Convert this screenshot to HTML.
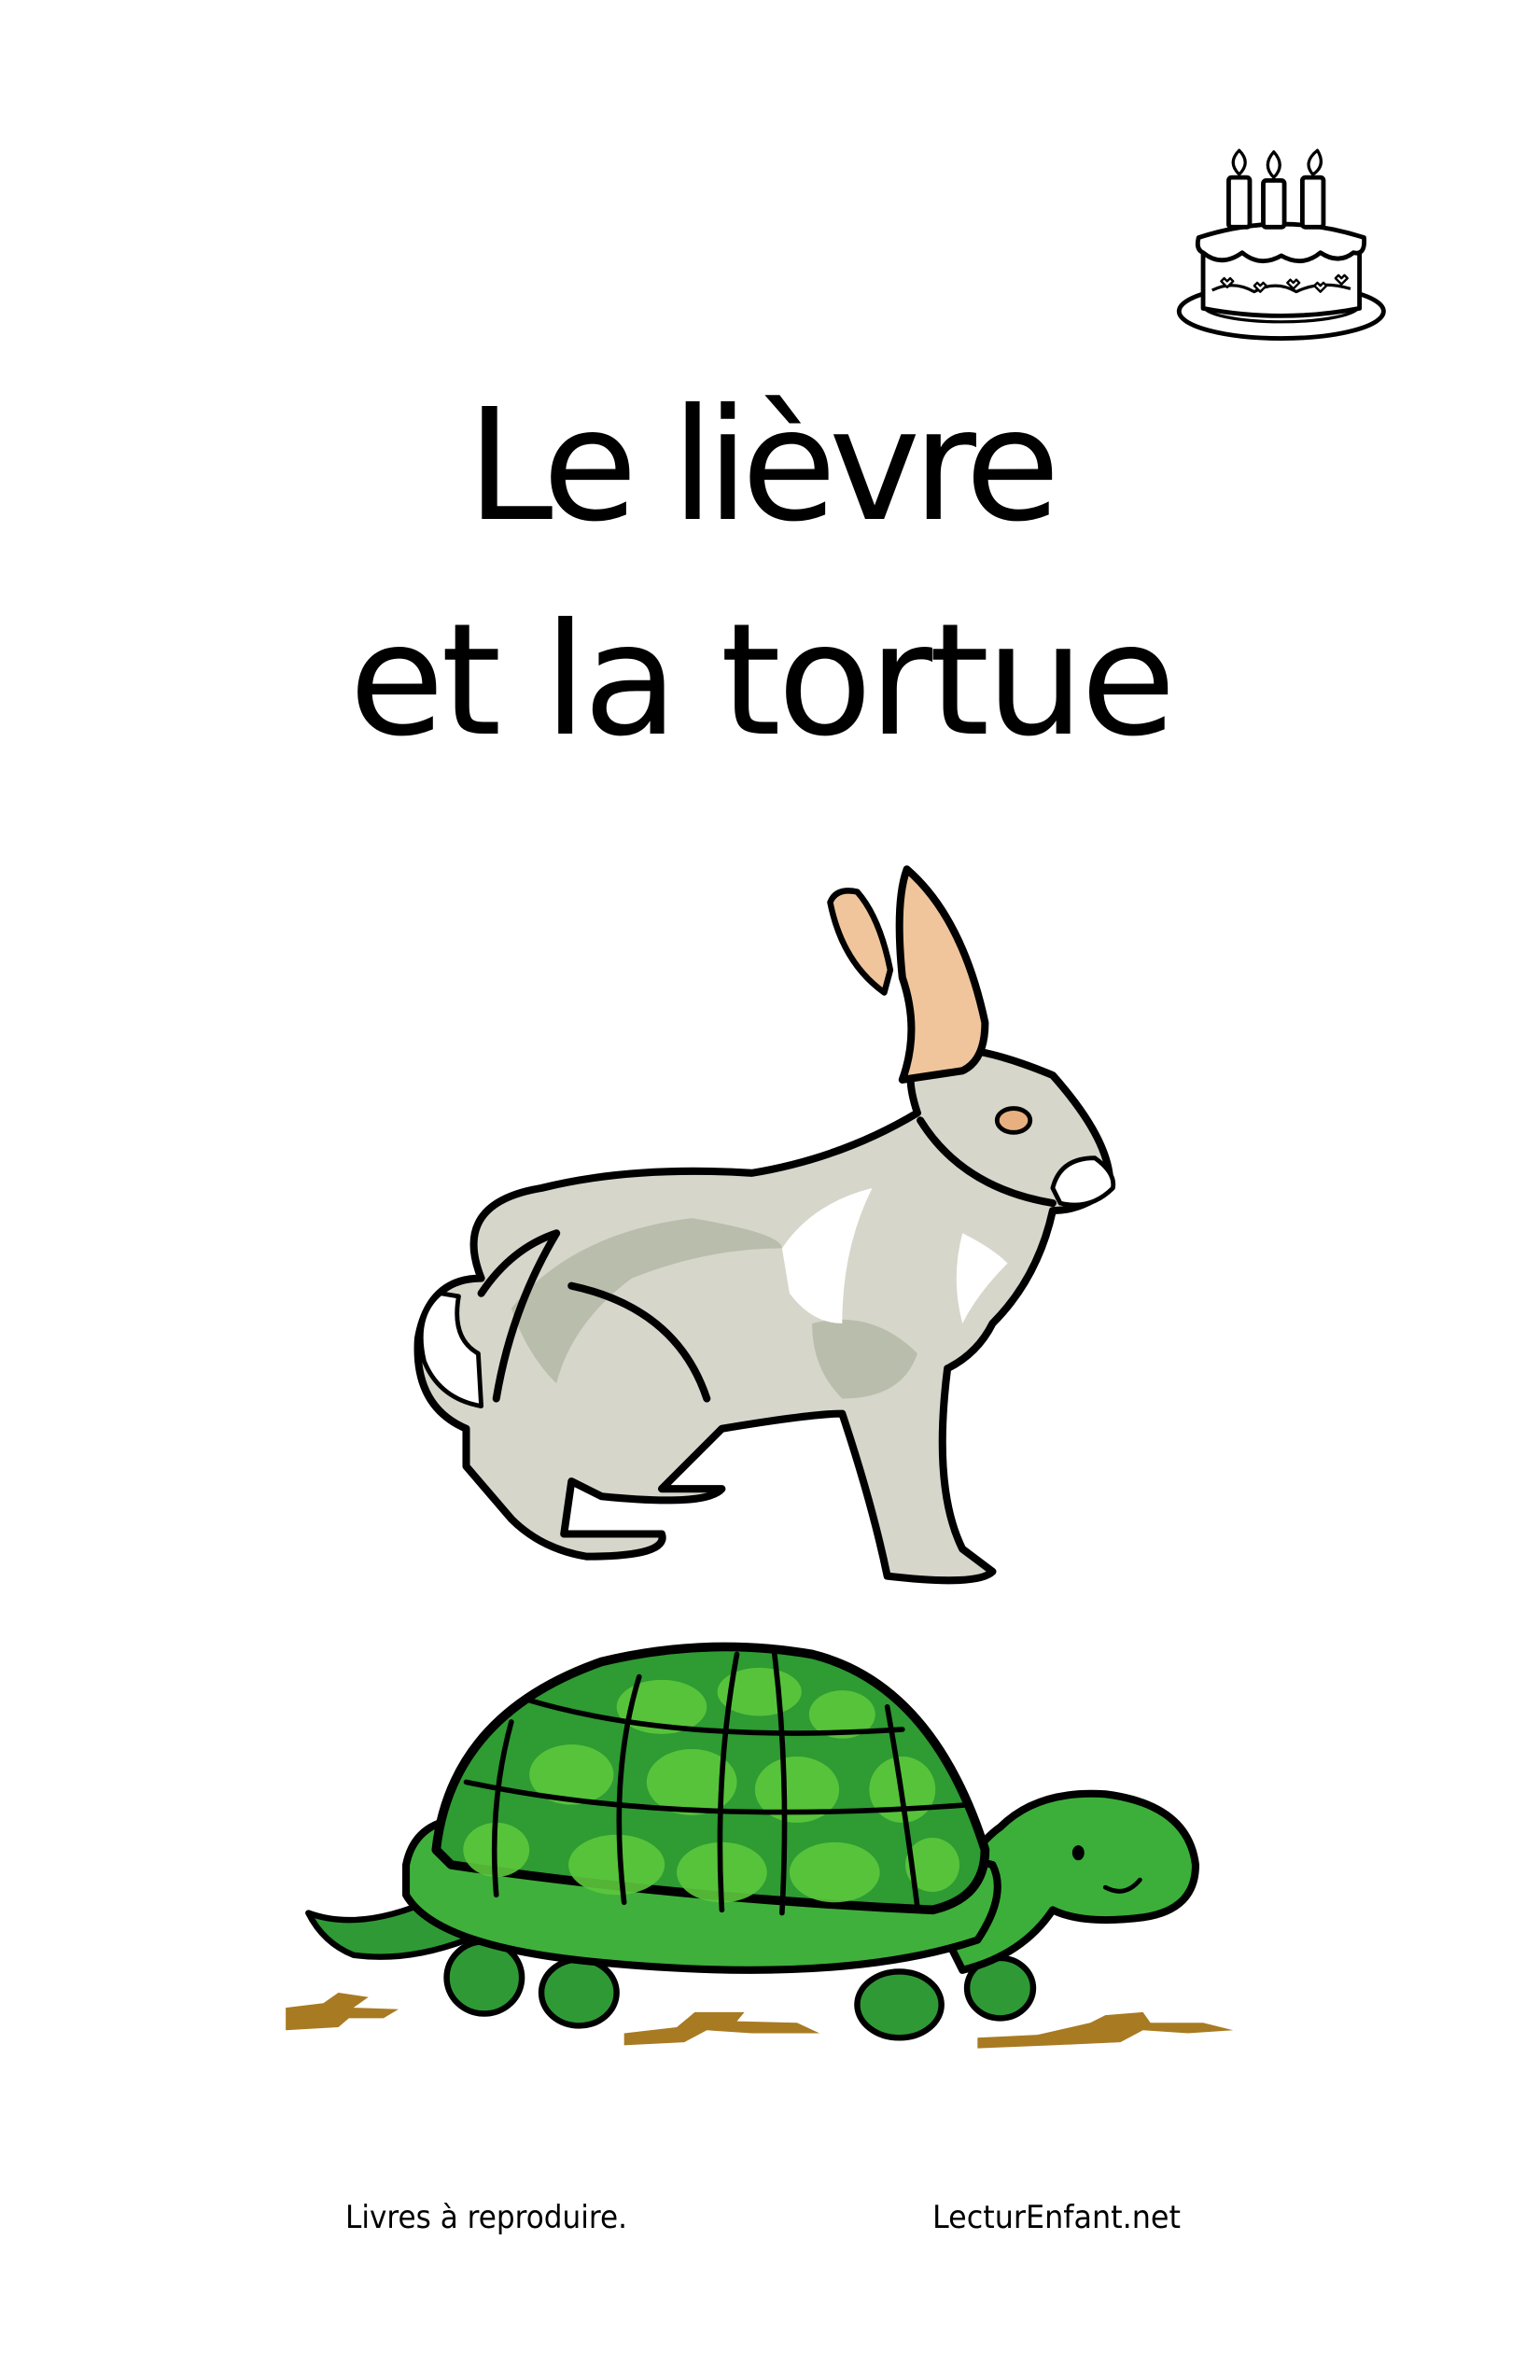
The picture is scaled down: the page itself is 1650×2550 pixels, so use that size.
<!DOCTYPE html>
<html><head><meta charset="utf-8"><style>
html,body{margin:0;padding:0;background:#fff;}
svg{display:block}
</style></head><body>
<svg width="1650" height="2550" viewBox="0 0 1650 2550" xmlns="http://www.w3.org/2000/svg">
<rect width="1650" height="2550" fill="#fff"/>
<g font-family="DejaVu Sans, Liberation Sans, sans-serif" fill="#000">
<text x="500" y="556" font-size="166" textLength="636" lengthAdjust="spacing">Le lièvre</text>
<text x="374" y="786" font-size="166" textLength="886" lengthAdjust="spacing">et la tortue</text>
<text x="370" y="2387" font-size="34" textLength="302" lengthAdjust="spacingAndGlyphs">Livres à reproduire.</text>
<text x="999" y="2387" font-size="34" textLength="266" lengthAdjust="spacingAndGlyphs">LecturEnfant.net</text>
</g>
<g transform="scale(1.6113)">
<!-- cake -->
<g fill="#fff" stroke="#000" stroke-width="3" stroke-linejoin="round">
<ellipse cx="852" cy="207" rx="68" ry="18"/>
<ellipse cx="852" cy="203" rx="52" ry="11" stroke-width="2"/>
<path d="M800 163 L800 205 Q852 215 904 205 L904 163 Z"/>
<path d="M797 158 Q852 140 907 158 Q908 170 900 168 Q890 176 878 168 Q866 178 852 170 Q838 178 826 168 Q812 178 800 168 Q795 166 797 158 Z"/>
<rect x="817" y="118" width="14" height="33" rx="2"/>
<rect x="840" y="120" width="14" height="31" rx="2"/>
<rect x="866" y="118" width="14" height="33" rx="2"/>
<path d="M824 116 Q816 108 824 100 Q832 108 824 116Z M847 118 Q839 110 847 101 Q855 110 847 118Z M873 116 Q866 108 876 100 Q882 110 873 116Z" stroke-width="2"/>
<path d="M806 193 Q820 186 834 194 Q848 186 862 194 Q878 186 898 192" fill="none" stroke-width="2"/>
<g stroke-width="1.5"><path d="M812 187 l4 4 4-4 -2-2-2 2-2-2z"/><path d="M834 190 l4 4 4-4 -2-2-2 2-2-2z"/><path d="M856 188 l4 4 4-4 -2-2-2 2-2-2z"/><path d="M874 190 l4 4 4-4 -2-2-2 2-2-2z"/><path d="M888 185 l4 4 4-4 -2-2-2 2-2-2z"/></g>
</g>
<!-- hare -->
<g stroke-linejoin="round" stroke-linecap="round">
<path d="M310 950 Q275 935 278 890 Q285 850 320 850 Q300 800 360 790 Q420 775 500 780 Q560 770 610 740 Q600 710 612 700 Q640 690 700 715 Q740 760 738 790 Q720 805 700 805 Q690 850 660 880 Q650 900 630 910 Q620 990 640 1030 L660 1045 Q650 1055 590 1048 Q580 1000 560 940 Q540 940 480 950 L440 990 L480 990 Q470 1002 400 995 L380 985 L375 1020 L440 1020 Q445 1035 390 1035 Q360 1030 340 1010 L310 975 Z" fill="#d6d6ca" stroke="#000" stroke-width="5"/>
<path d="M340 870 Q380 820 460 810 Q520 820 520 830 Q470 830 420 850 Q380 880 370 920 Q350 900 340 870Z" fill="#b9bdab"/>
<path d="M540 880 Q580 870 610 900 Q600 930 560 930 Q540 910 540 880Z" fill="#b9bdab"/>
<path d="M520 830 Q540 800 580 790 Q560 830 560 880 Q540 880 525 860 Z" fill="#fff"/>
<path d="M640 820 Q660 830 670 840 Q650 860 640 880 Q632 850 640 820Z" fill="#fff"/>
<path d="M320 860 Q340 830 370 820 Q340 870 330 930" fill="none" stroke="#000" stroke-width="5"/>
<path d="M380 855 Q450 870 470 930" fill="none" stroke="#000" stroke-width="5"/>
<path d="M612 745 Q640 790 700 800" fill="none" stroke="#000" stroke-width="5"/>
<path d="M600 718 Q612 685 600 650 Q595 600 603 578 Q640 610 655 680 Q655 705 640 712 Z" fill="#f0c59c" stroke="#000" stroke-width="5"/>
<path d="M588 660 Q560 640 552 600 Q556 590 570 593 Q585 610 592 645 Z" fill="#f0c59c" stroke="#000" stroke-width="4"/>
<ellipse cx="674" cy="745" rx="11" ry="8" fill="#e8b080" stroke="#000" stroke-width="3"/>
<path d="M700 790 Q705 770 728 770 Q742 780 740 790 Q725 805 705 800 Z" fill="#fff" stroke="#000" stroke-width="3"/>
<path d="M293 860 Q275 875 282 905 Q292 930 320 935 L318 900 Q300 890 305 862 Z" fill="#fff" stroke="#000" stroke-width="3"/>
</g>
<!-- turtle -->
<g stroke-linejoin="round" stroke-linecap="round">
<path d="M205 1272 Q240 1285 290 1262 L310 1290 Q270 1305 235 1300 Q215 1292 205 1272Z" fill="#2f9a35" stroke="#000" stroke-width="4"/>
<g fill="#2f9a35" stroke="#000" stroke-width="4">
<ellipse cx="322" cy="1315" rx="25" ry="24"/>
<ellipse cx="385" cy="1325" rx="25" ry="22"/>
<ellipse cx="598" cy="1333" rx="28" ry="22"/>
<ellipse cx="665" cy="1322" rx="22" ry="20"/>
</g>
<path d="M620 1270 Q650 1225 665 1215 Q690 1190 735 1193 Q790 1200 795 1240 Q795 1270 760 1275 Q720 1280 700 1270 Q680 1300 640 1310 Z" fill="#3caf3a" stroke="#000" stroke-width="5"/>
<path d="M270 1240 Q275 1215 300 1210 Q620 1230 660 1240 Q670 1260 650 1290 Q560 1320 400 1305 Q290 1295 270 1260 Z" fill="#3fb03c" stroke="#000" stroke-width="5"/>
<path d="M290 1230 Q300 1140 400 1105 Q470 1088 540 1100 Q620 1120 655 1230 Q655 1262 620 1270 Q450 1262 300 1240 Z" fill="#2e9b33" stroke="#000" stroke-width="6"/>
<g fill="#5cc83c" opacity="0.9">
<ellipse cx="440" cy="1135" rx="30" ry="18"/><ellipse cx="505" cy="1125" rx="28" ry="16"/><ellipse cx="560" cy="1140" rx="22" ry="16"/>
<ellipse cx="380" cy="1180" rx="28" ry="20"/><ellipse cx="460" cy="1185" rx="30" ry="22"/><ellipse cx="530" cy="1190" rx="28" ry="22"/><ellipse cx="600" cy="1190" rx="22" ry="22"/>
<ellipse cx="330" cy="1230" rx="22" ry="18"/><ellipse cx="410" cy="1240" rx="32" ry="20"/><ellipse cx="480" cy="1245" rx="30" ry="20"/><ellipse cx="555" cy="1245" rx="30" ry="20"/><ellipse cx="620" cy="1240" rx="18" ry="18"/>
</g>
<g fill="none" stroke="#000" stroke-width="3.5">
<path d="M350 1130 Q450 1160 600 1150"/>
<path d="M310 1185 Q450 1215 645 1200"/>
<path d="M340 1145 Q325 1200 330 1260"/>
<path d="M425 1115 Q405 1180 415 1265"/>
<path d="M490 1100 Q475 1180 480 1270"/>
<path d="M515 1100 Q525 1180 520 1272"/>
<path d="M590 1135 Q600 1190 610 1268"/>
</g>
<ellipse cx="717" cy="1232" rx="4" ry="5" fill="#000"/>
<path d="M735 1255 Q748 1262 758 1250" fill="none" stroke="#000" stroke-width="3"/>
</g>
<!-- dirt -->
<g fill="#a87a22">
<path d="M190 1335 L215 1332 L225 1325 L245 1328 L235 1335 L265 1336 L255 1342 L232 1342 L225 1348 L190 1350 Z"/>
<path d="M415 1352 L450 1348 L462 1338 L495 1338 L490 1344 L530 1345 L545 1352 L500 1352 L470 1350 L455 1358 L415 1360 Z"/>
<path d="M650 1355 L690 1353 L725 1345 L735 1340 L760 1338 L765 1345 L800 1345 L820 1350 L790 1352 L760 1350 L745 1358 L700 1360 L650 1362 Z"/>
</g>
</g>
</svg>
</body></html>
